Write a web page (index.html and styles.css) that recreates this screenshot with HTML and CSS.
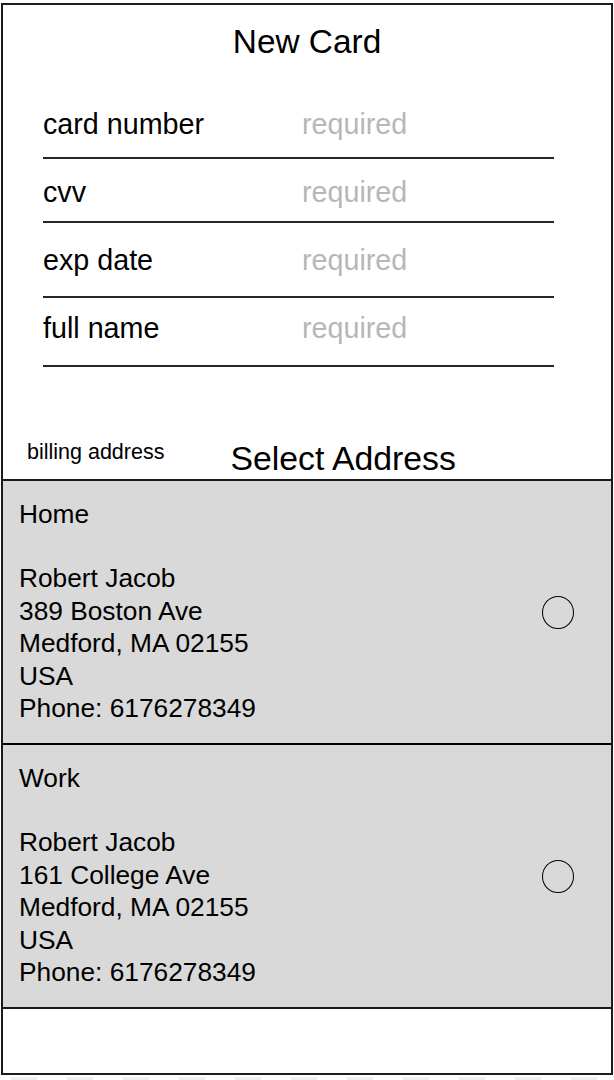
FILE: index.html
```html
<!DOCTYPE html>
<html lang="en">
<head>
<meta charset="utf-8">
<title>New Card</title>
<link rel="stylesheet" href="styles.css">
</head>
<body>
<div class="frame">
  <h1 class="title">New Card</h1>
  <form class="card-form">
    <div class="field field-1"><span class="field-label">card number</span><span class="field-value">required</span></div>
    <div class="field field-2"><span class="field-label">cvv</span><span class="field-value">required</span></div>
    <div class="field field-3"><span class="field-label">exp date</span><span class="field-value">required</span></div>
    <div class="field field-4"><span class="field-label">full name</span><span class="field-value">required</span></div>
  </form>
  <div class="addr-head">
    <span class="addr-caption">billing address</span>
    <h2 class="addr-title">Select Address</h2>
  </div>
  <section class="addresses">
    <div class="address">
      <div class="address-text">
        <div>Home</div>
        <div>&nbsp;</div>
        <div>Robert Jacob</div>
        <div>389 Boston Ave</div>
        <div>Medford, MA 02155</div>
        <div>USA</div>
        <div>Phone: 6176278349</div>
      </div>
      <span class="radio"></span>
    </div>
    <div class="address">
      <div class="address-text">
        <div>Work</div>
        <div>&nbsp;</div>
        <div>Robert Jacob</div>
        <div>161 College Ave</div>
        <div>Medford, MA 02155</div>
        <div>USA</div>
        <div>Phone: 6176278349</div>
      </div>
      <span class="radio"></span>
    </div>
  </section>
</div>
<div class="checker"></div>
</body>
</html>
```

FILE: styles.css
```css
* { box-sizing: border-box; }

html, body {
  margin: 0;
  padding: 0;
  background: #fff;
}

body {
  width: 614px;
  height: 1080px;
  overflow: hidden;
  font-family: "Liberation Sans", Arial, sans-serif;
  color: #000;
}

.frame {
  margin: 3px 1px 0 1px;
  width: 612px;
  height: 1072px;
  border: 2px solid #1c1c1c;
  display: flex;
  flex-direction: column;
}

.title {
  margin: 17px 0 0;
  font-size: 33.4px;
  font-weight: normal;
  line-height: 40px;
  text-align: center;
}

.card-form {
  margin: 46px 0 0 40px;
  width: 511px;
  display: flex;
  flex-direction: column;
}

.field {
  display: flex;
  font-size: 28.7px;
  line-height: 32px;
  border-bottom: 2px solid #262626;
}

.field-1 { padding: 0 0 17px; }
.field-2 { padding: 17px 0 13px; }
.field-3 { padding: 21px 0 20px; }
.field-4 { padding: 14px 0 21px; }

.field-label {
  width: 259px;
  flex: none;
}

.field-value {
  color: #b7b7b7;
}

.addr-head {
  display: flex;
  align-items: flex-start;
  gap: 66px;
  padding: 72px 0 2px 24px;
}

.addr-caption {
  margin-top: 1px;
  font-size: 21.5px;
  line-height: 24px;
}

.addr-title {
  margin: 0;
  font-size: 33.8px;
  font-weight: normal;
  line-height: 38px;
}

.addresses {
  border-top: 2px solid #1a1a1a;
  border-bottom: 2px solid #1a1a1a;
  display: flex;
  flex-direction: column;
}

.address {
  height: 262px;
  background: #d9d9d9;
  display: flex;
  align-items: center;
  justify-content: space-between;
  padding: 0 37px 0 16px;
}

.address + .address {
  height: 264px;
  border-top: 2px solid #000;
}

.address-text {
  font-size: 26.3px;
  line-height: 32.4px;
  padding-bottom: 2px;
}

.radio {
  width: 32px;
  height: 33px;
  border: 1.6px solid #000;
  border-radius: 50%;
  flex: none;
}

.checker {
  margin-top: 2px;
  height: 3px;
  background-image: linear-gradient(to right, #efefef 0 28px, transparent 28px);
  background-size: 56px 100%;
  background-position: 10px 0;
}
```
